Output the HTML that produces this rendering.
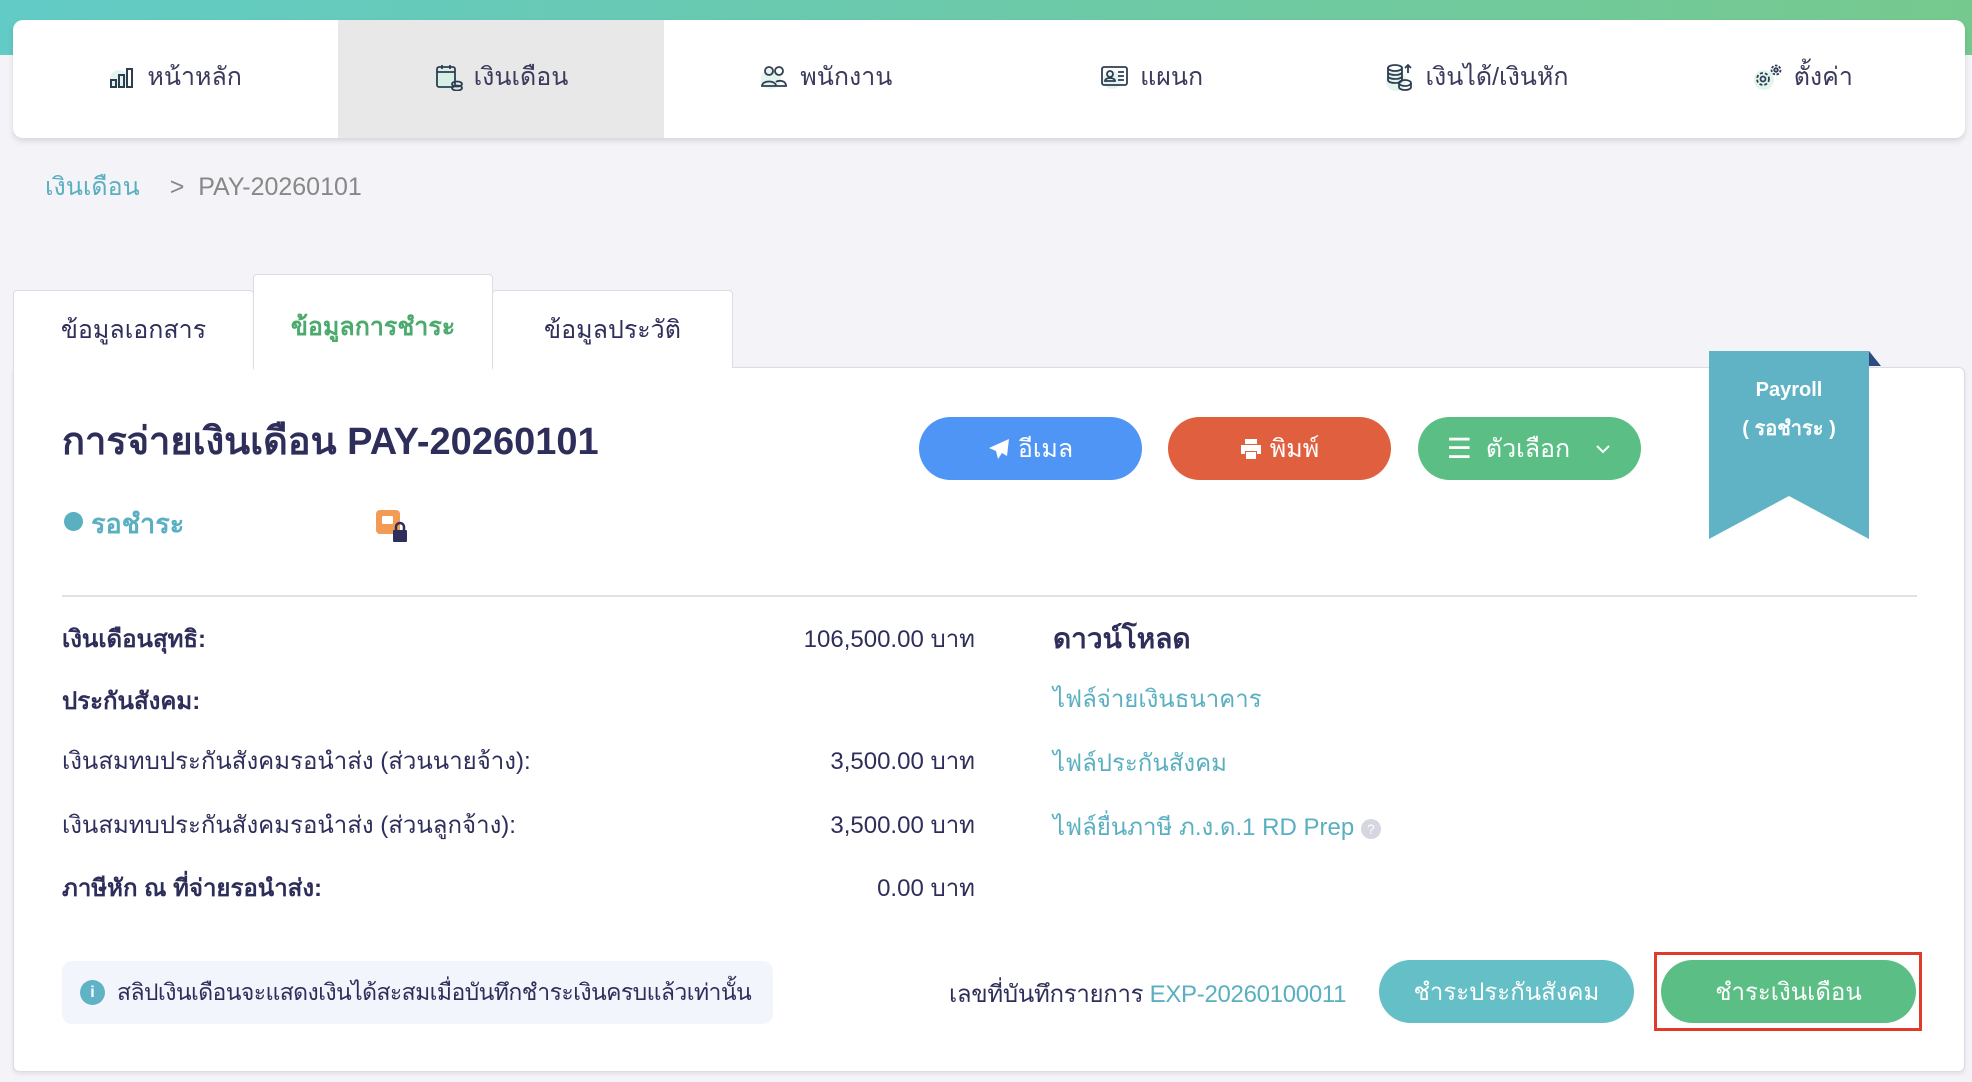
<!DOCTYPE html>
<html><head><meta charset="utf-8">
<style>
*{box-sizing:border-box;margin:0;padding:0}
body{width:1972px;height:1082px;background:#f3f3f8;font-family:"Liberation Sans","Noto Sans CJK SC",sans-serif;color:#2e2e5a;position:relative;overflow:hidden}
.topbar{position:absolute;left:0;top:0;width:1972px;height:55px;background:linear-gradient(90deg,#62cbc6,#76c98e)}
.nav{position:absolute;left:13px;top:20px;width:1952px;height:118px;background:#fff;border-radius:10px;box-shadow:0 3px 6px rgba(0,0,0,.12);display:flex;overflow:hidden}
.nav div{flex:1;display:flex;align-items:center;justify-content:center;font-size:25px;color:#3a3a5c;padding-bottom:4px}
.nav div.act{background:#e8e8e8}
.nav svg{margin-right:10px}
.bc{position:absolute;top:167px;left:45px;font-size:25px;color:#888}
.bc a{color:#5aafc0;text-decoration:none;margin-right:30px}
.tab{position:absolute;background:#fff;border:1px solid #dcdce4;border-bottom:none;border-radius:4px 4px 0 0;font-size:25px;display:flex;align-items:center;justify-content:center;color:#2e2e5a}
.card{position:absolute;left:13px;top:367px;width:1952px;height:705px;background:#fff;border:1px solid #dcdce4;border-radius:0 6px 6px 6px;box-shadow:0 2px 4px rgba(0,0,0,.08)}
.abs{position:absolute}
.btn{position:absolute;height:63px;border-radius:32px;color:#fff;font-size:25px;display:flex;align-items:center;justify-content:center}
.row{position:absolute;left:62px;width:913px;font-size:24px;display:flex;justify-content:space-between}
.row b{font-weight:bold}
.lnk{position:absolute;left:1053px;font-size:24px;color:#5aafc0}
</style></head><body>
<div class="topbar"></div>
<div class="nav">
 <div><svg width="28" height="24" viewBox="0 0 28 24"><circle cx="10" cy="14" r="9" fill="#e3f4ee"/><g fill="none" stroke="#2e3e52" stroke-width="2"><rect x="2" y="15" width="5" height="7"/><rect x="10" y="10" width="5" height="12"/><rect x="18" y="4" width="5" height="18"/></g></svg>หน้าหลัก</div>
 <div class="act"><svg width="30" height="28" viewBox="0 0 30 28"><circle cx="12" cy="16" r="11" fill="#d8efe6"/><g fill="none" stroke="#2e3e52" stroke-width="1.8"><rect x="3" y="4" width="18" height="20" rx="2"/><path d="M3 9h18M8 2v4M16 2v4"/><ellipse cx="23" cy="21" rx="5" ry="2.5"/><ellipse cx="23" cy="25" rx="5" ry="2.5"/></g></svg>เงินเดือน</div>
 <div><svg width="30" height="26" viewBox="0 0 30 26"><circle cx="11" cy="15" r="10" fill="#e3f4ee"/><g fill="none" stroke="#2e3e52" stroke-width="1.8"><circle cx="9" cy="7" r="4"/><circle cx="19" cy="7" r="4"/><path d="M2 22c0-6 14-6 14 0zM14 22h12c0-6-8-6-10-4"/></g></svg>พนักงาน</div>
 <div><svg width="30" height="26" viewBox="0 0 30 26"><circle cx="12" cy="16" r="9" fill="#e3f4ee"/><g fill="none" stroke="#2e3e52" stroke-width="1.8"><rect x="2" y="3" width="25" height="18" rx="2"/><circle cx="10" cy="10" r="3"/><path d="M5 17c0-4 10-4 10 0zM18 8h6M18 12h6M18 16h6"/></g></svg>แผนก</div>
 <div><svg width="30" height="28" viewBox="0 0 30 28"><circle cx="11" cy="18" r="10" fill="#e3f4ee"/><g fill="none" stroke="#2e3e52" stroke-width="1.8"><ellipse cx="10" cy="5" rx="7" ry="3"/><path d="M3 5v12c0 4 14 4 14 0V5M3 9c0 4 14 4 14 0M3 13c0 4 14 4 14 0"/><ellipse cx="20" cy="20" rx="6" ry="3"/><path d="M14 20v4c0 4 12 4 12 0v-4M23 2v8M20 5l3-3 3 3"/></g></svg>เงินได้/เงินหัก</div>
 <div><svg width="32" height="28" viewBox="0 0 32 28"><circle cx="12" cy="17" r="10" fill="#e3f4ee"/><g fill="none" stroke="#2e3e52" stroke-width="1.8"><circle cx="11" cy="16" r="6" stroke-dasharray="3 2"/><circle cx="11" cy="16" r="2.5"/><circle cx="24" cy="7" r="4.5" stroke-dasharray="2.5 1.5"/><circle cx="24" cy="7" r="1.8"/></g></svg>ตั้งค่า</div>
</div>
<div class="bc"><a>เงินเดือน</a>&gt;&nbsp; PAY-20260101</div>

<div class="card">
 <div class="abs" style="left:48px;top:42px;font-size:38px;font-weight:bold;color:#2e2e5a">การจ่ายเงินเดือน PAY-20260101</div>
 <div class="btn" style="left:905px;top:49px;width:223px;background:#4f95f5"><svg width="22" height="22" viewBox="0 0 22 22" style="margin-right:8px"><path d="M21 1L1 10l7 3 2 8 4-6 5 3z" fill="#fff"/></svg>อีเมล</div>
 <div class="btn" style="left:1154px;top:49px;width:223px;background:#e05f3e"><svg width="22" height="20" viewBox="0 0 22 20" style="margin-right:8px"><path d="M5 0h12v5H5zM1 6h20v9h-4v-3H5v3H1zM6 13h10v7H6z" fill="#fff"/></svg>พิมพ์</div>
 <div class="btn" style="left:1404px;top:49px;width:223px;background:#5bbf85"><span style="font-size:28px;margin-right:14px">☰</span>ตัวเลือก<svg width="18" height="12" viewBox="0 0 18 12" style="margin-left:24px"><path d="M3 3l6 6 6-6" fill="none" stroke="#fff" stroke-width="2"/></svg></div>
 <div class="abs" style="left:50px;top:144px;width:19px;height:19px;border-radius:50%;background:#5aafc0"></div>
 <div class="abs" style="left:77px;top:134px;font-size:27px;font-weight:bold;color:#5aafc0">รอชำระ</div>
 <svg class="abs" style="left:361px;top:141px" width="34" height="34" viewBox="0 0 34 34"><rect x="1" y="1" width="24" height="24" rx="4" fill="#f39b55"/><rect x="7" y="7" width="11" height="8" rx="1" fill="#fff"/><path d="M21 21v-3a4 4 0 018 0v3" fill="none" stroke="#2e2e5a" stroke-width="2.5"/><rect x="18" y="21" width="14" height="12" rx="1" fill="#2e2e5a"/></svg>
 <div class="abs" style="left:48px;top:227px;width:1855px;height:2px;background:#e0e0e6"></div>
 <div class="row" style="left:48px;top:251px"><b>เงินเดือนสุทธิ:</b><span>106,500.00 บาท</span></div>
 <div class="row" style="left:48px;top:313px"><b>ประกันสังคม:</b><span></span></div>
 <div class="row" style="left:48px;top:373px"><span>เงินสมทบประกันสังคมรอนำส่ง (ส่วนนายจ้าง):</span><span>3,500.00 บาท</span></div>
 <div class="row" style="left:48px;top:437px"><span>เงินสมทบประกันสังคมรอนำส่ง (ส่วนลูกจ้าง):</span><span>3,500.00 บาท</span></div>
 <div class="row" style="left:48px;top:500px"><b>ภาษีหัก ณ ที่จ่ายรอนำส่ง:</b><span>0.00 บาท</span></div>
 <div class="abs" style="left:1039px;top:249px;font-size:28px;font-weight:bold">ดาวน์โหลด</div>
 <div class="lnk" style="left:1039px;top:311px">ไฟล์จ่ายเงินธนาคาร</div>
 <div class="lnk" style="left:1039px;top:375px">ไฟล์ประกันสังคม</div>
 <div class="lnk" style="left:1039px;top:439px">ไฟล์ยื่นภาษี ภ.ง.ด.1 RD Prep <span style="display:inline-block;width:20px;height:20px;border-radius:50%;background:#d6d6e0;color:#fff;font-size:14px;text-align:center;line-height:20px;vertical-align:middle">?</span></div>
 <div class="abs" style="left:48px;top:593px;width:711px;height:63px;background:#f2f6fc;border-radius:10px;font-size:23px;display:flex;align-items:center;padding-left:18px;white-space:nowrap;overflow:hidden"><span style="display:inline-block;flex:none;width:25px;height:25px;border-radius:50%;background:#5fb3c4;color:#fff;font-size:16px;font-weight:bold;text-align:center;line-height:25px;margin-right:12px">i</span><span style="letter-spacing:-0.6px">สลิปเงินเดือนจะแสดงเงินได้สะสมเมื่อบันทึกชำระเงินครบแล้วเท่านั้น</span></div>
 <div class="abs" style="left:935px;top:606px;font-size:24px;letter-spacing:-0.3px">เลขที่บันทึกรายการ <span style="color:#5aafc0">EXP-20260100011</span></div>
 <div class="btn" style="left:1365px;top:592px;width:255px;background:#65bfc6;font-size:24px">ชำระประกันสังคม</div>
 <div class="abs" style="left:1640px;top:584px;width:268px;height:79px;border:3px solid #e03a2a"></div>
 <div class="btn" style="left:1647px;top:592px;width:255px;background:#5bbf85;font-size:24px">ชำระเงินเดือน</div>
</div>

<div class="tab" style="left:13px;top:290px;width:241px;height:78px">ข้อมูลเอกสาร</div>
<div class="tab" style="left:253px;top:274px;width:240px;height:96px;color:#4caa6e;font-weight:bold;align-items:flex-start;padding-top:32px;border-bottom:2px solid #fff">ข้อมูลการชำระ</div>
<div class="tab" style="left:492px;top:290px;width:241px;height:78px">ข้อมูลประวัติ</div>

<svg class="abs" style="left:1709px;top:351px" width="175" height="190" viewBox="0 0 175 190"><path d="M160 0l12 15h-12z" fill="#2d4d80"/><path d="M0 0h160v188l-80-43-80 43z" fill="#5fb3c4"/><text x="80" y="45" text-anchor="middle" font-family="Liberation Sans,sans-serif" font-size="20" font-weight="bold" fill="#fff">Payroll</text><text x="80" y="84" text-anchor="middle" font-family="Liberation Sans,sans-serif" font-size="20" font-weight="bold" fill="#fff">( รอชำระ )</text></svg>
</body></html>
